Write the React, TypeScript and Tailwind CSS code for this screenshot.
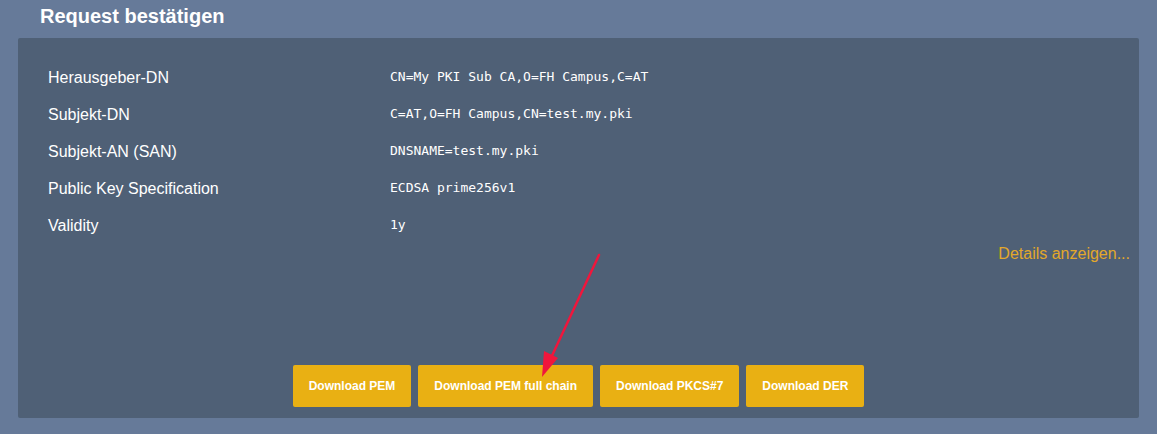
import React from "react";

const rows = [
  { label: "Herausgeber-DN", value: "CN=My PKI Sub CA,O=FH Campus,C=AT" },
  { label: "Subjekt-DN", value: "C=AT,O=FH Campus,CN=test.my.pki" },
  { label: "Subjekt-AN (SAN)", value: "DNSNAME=test.my.pki" },
  { label: "Public Key Specification", value: "ECDSA prime256v1" },
  { label: "Validity", value: "1y" },
];

const buttons = ["Download PEM", "Download PEM full chain", "Download PKCS#7", "Download DER"];

const App = () => {
  return (
    <div
      className="relative w-[1157px] h-[434px] bg-[#667a99] overflow-hidden"
      style={{ fontFamily: '"Liberation Sans", Arial, sans-serif' }}
    >
      <h1 className="pl-[40px] pt-[4px] h-[38px] text-[20px] leading-[24px] font-bold text-white">
        Request bestätigen
      </h1>
      <div className="mx-[18px] h-[380px] bg-[#4f6076] rounded-[2px] pt-[21px] flex flex-col">
        <table className="ml-[30px] mr-[9px] border-collapse">
          <tbody>
            {rows.map((row) => (
              <tr key={row.label} className="h-[37px]">
                <td className="w-[342px] text-[16px] text-white align-middle">{row.label}</td>
                <td
                  className="text-[13px] text-white align-middle pb-[2px]"
                  style={{ fontFamily: '"DejaVu Sans Mono", monospace' }}
                >
                  {row.value}
                </td>
              </tr>
            ))}
          </tbody>
        </table>
        <div className="mr-[9px] text-right text-[16px] leading-[20px] text-[#e3a82a]">
          Details anzeigen...
        </div>
        <div className="flex justify-center gap-[7px] mt-[101px]">
          {buttons.map((b) => (
            <button
              key={b}
              className="h-[42px] px-[16px] bg-[#e9b013] text-white text-[12px] font-bold rounded-[2px]"
            >
              {b}
            </button>
          ))}
        </div>
      </div>
      <svg className="absolute left-0 top-0 pointer-events-none" width="1157" height="434">
        <line x1="599" y1="255" x2="550" y2="360" stroke="#f0163c" strokeWidth="2.5" strokeLinecap="round" />
        <polygon points="542,377 544,351 558,358" fill="#f0163c" />
      </svg>
    </div>
  );
};

export default App;
